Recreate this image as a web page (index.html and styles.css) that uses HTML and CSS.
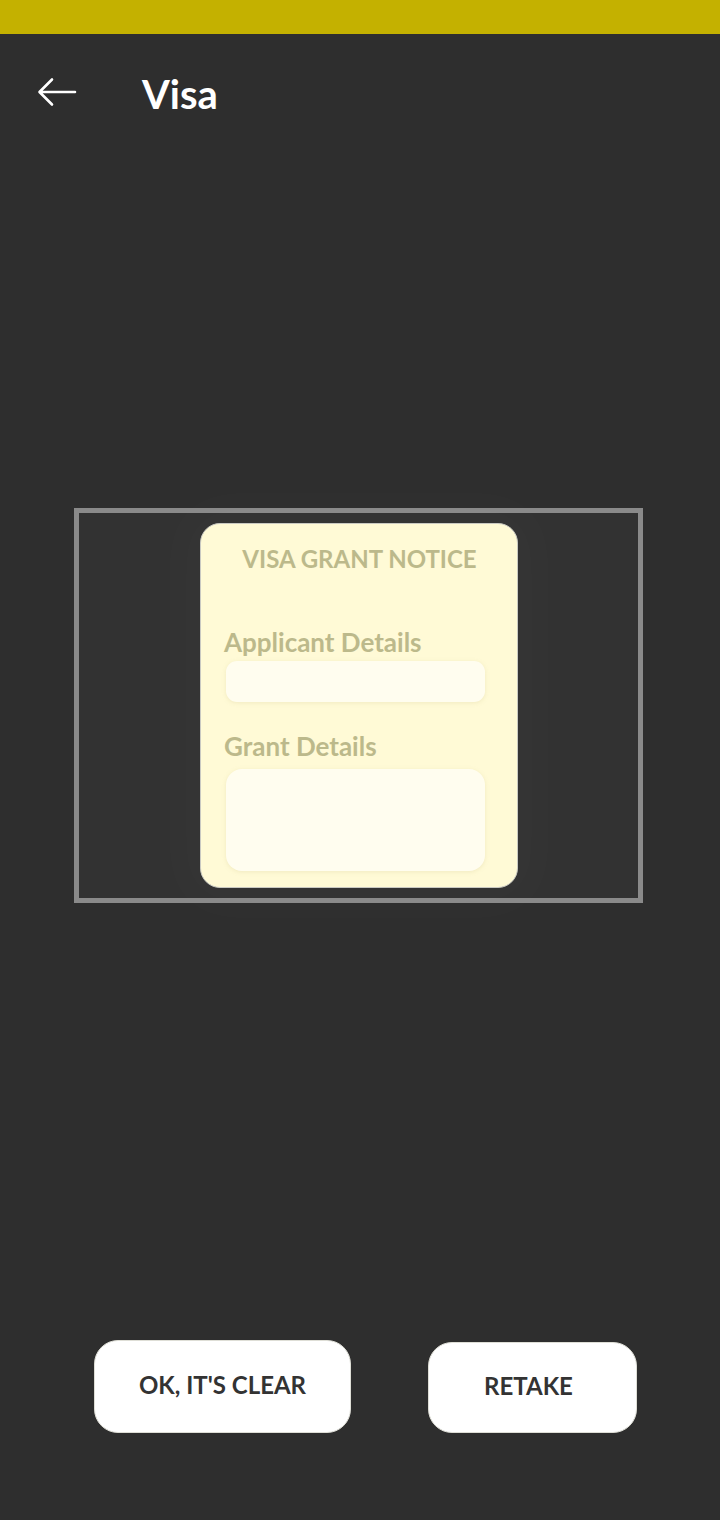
FILE: index.html
```html
<!DOCTYPE html>
<html>
<head>
<meta charset="utf-8">
<link rel="stylesheet" href="styles.css">
</head>
<body>
<div class="page">
  <div class="status"></div>
  <header class="header">
    <svg class="back" width="40" height="30" viewBox="0 0 40 30">
      <path d="M38 15 H3 M15 2.5 L2.5 15 L15 27.5" fill="none" stroke="#ffffff" stroke-width="2.6" stroke-linecap="round" stroke-linejoin="round"/>
    </svg>
    <h1 class="title">Visa</h1>
  </header>
  <main class="main">
    <div class="frame">
      <div class="card">
        <div class="card-title">VISA GRANT NOTICE</div>
        <div class="label label-first">Applicant Details</div>
        <div class="field field-short"></div>
        <div class="label label-second">Grant Details</div>
        <div class="field field-tall"></div>
      </div>
    </div>
  </main>
  <footer class="actions">
    <button class="btn btn-ok">OK, IT'S CLEAR</button>
    <button class="btn btn-retake">RETAKE</button>
  </footer>
</div>
</body>
</html>
```

FILE: styles.css
```css
html, body {
  margin: 0;
  padding: 0;
  background: #2e2e2e;
}
.page {
  width: 720px;
  height: 1520px;
  display: flex;
  flex-direction: column;
  font-family: Lato, "Open Sans", sans-serif;
  overflow: hidden;
}
.status {
  height: 34px;
  background: #c4b100;
  flex: none;
}
.header {
  height: 116px;
  display: flex;
  align-items: center;
  padding-left: 37px;
  box-sizing: border-box;
  flex: none;
}
.back {
  display: block;
}
.title {
  margin: 0 0 0 65px;
  font-size: 40px;
  font-weight: 700;
  color: #ffffff;
  line-height: 1;
  padding-top: 4px;
}
.main {
  padding-top: 358px;
  padding-left: 74px;
  flex: none;
}
.frame {
  width: 569px;
  height: 395px;
  box-sizing: border-box;
  border: 5px solid #8a8a8a;
  background: #323232;
  display: flex;
  justify-content: center;
  align-items: center;
}
.card {
  width: 318px;
  height: 365px;
  box-sizing: border-box;
  margin-left: 1px;
  border: 1.5px solid #c9c9c2;
  border-radius: 20px;
  background: #fffad6;
  padding: 23px 0 0 23px;
  box-shadow: 0 0 50px 30px rgba(255, 255, 255, 0.015);
}
.card-title {
  font-size: 24px;
  font-weight: 700;
  line-height: 1;
  color: #bcb98b;
  text-align: center;
  margin-left: -23px;
  padding-left: 1px;
}
.label {
  font-size: 26px;
  font-weight: 700;
  line-height: 1;
  color: #bcb98b;
}
.label-first {
  margin-top: 58px;
}
.label-second {
  margin-top: 31px;
}
.field {
  margin-left: 2px;
  width: 259px;
  background: #fffdef;
  border-radius: 11px;
  box-shadow: 0 1px 4px rgba(200, 190, 130, 0.25);
}
.field-short {
  margin-top: 6px;
  height: 41px;
}
.field-tall {
  margin-top: 10px;
  height: 102px;
  border-radius: 16px;
}
.actions {
  margin-top: 437px;
  padding-left: 94px;
  display: flex;
  align-items: flex-end;
  gap: 77px;
  flex: none;
}
.btn {
  font-family: Lato, "Open Sans", sans-serif;
  font-size: 24px;
  font-weight: 700;
  color: #333333;
  background: #ffffff;
  border: 1.5px solid #deded6;
  border-radius: 24px;
  padding: 0 0 5px 0;
  margin: 0;
  box-sizing: border-box;
  display: flex;
  align-items: center;
  justify-content: center;
}
.btn-ok {
  width: 257px;
  height: 93px;
  padding-right: 0;
}
.btn-retake {
  width: 209px;
  height: 91px;
  padding-right: 8px;
}
```
